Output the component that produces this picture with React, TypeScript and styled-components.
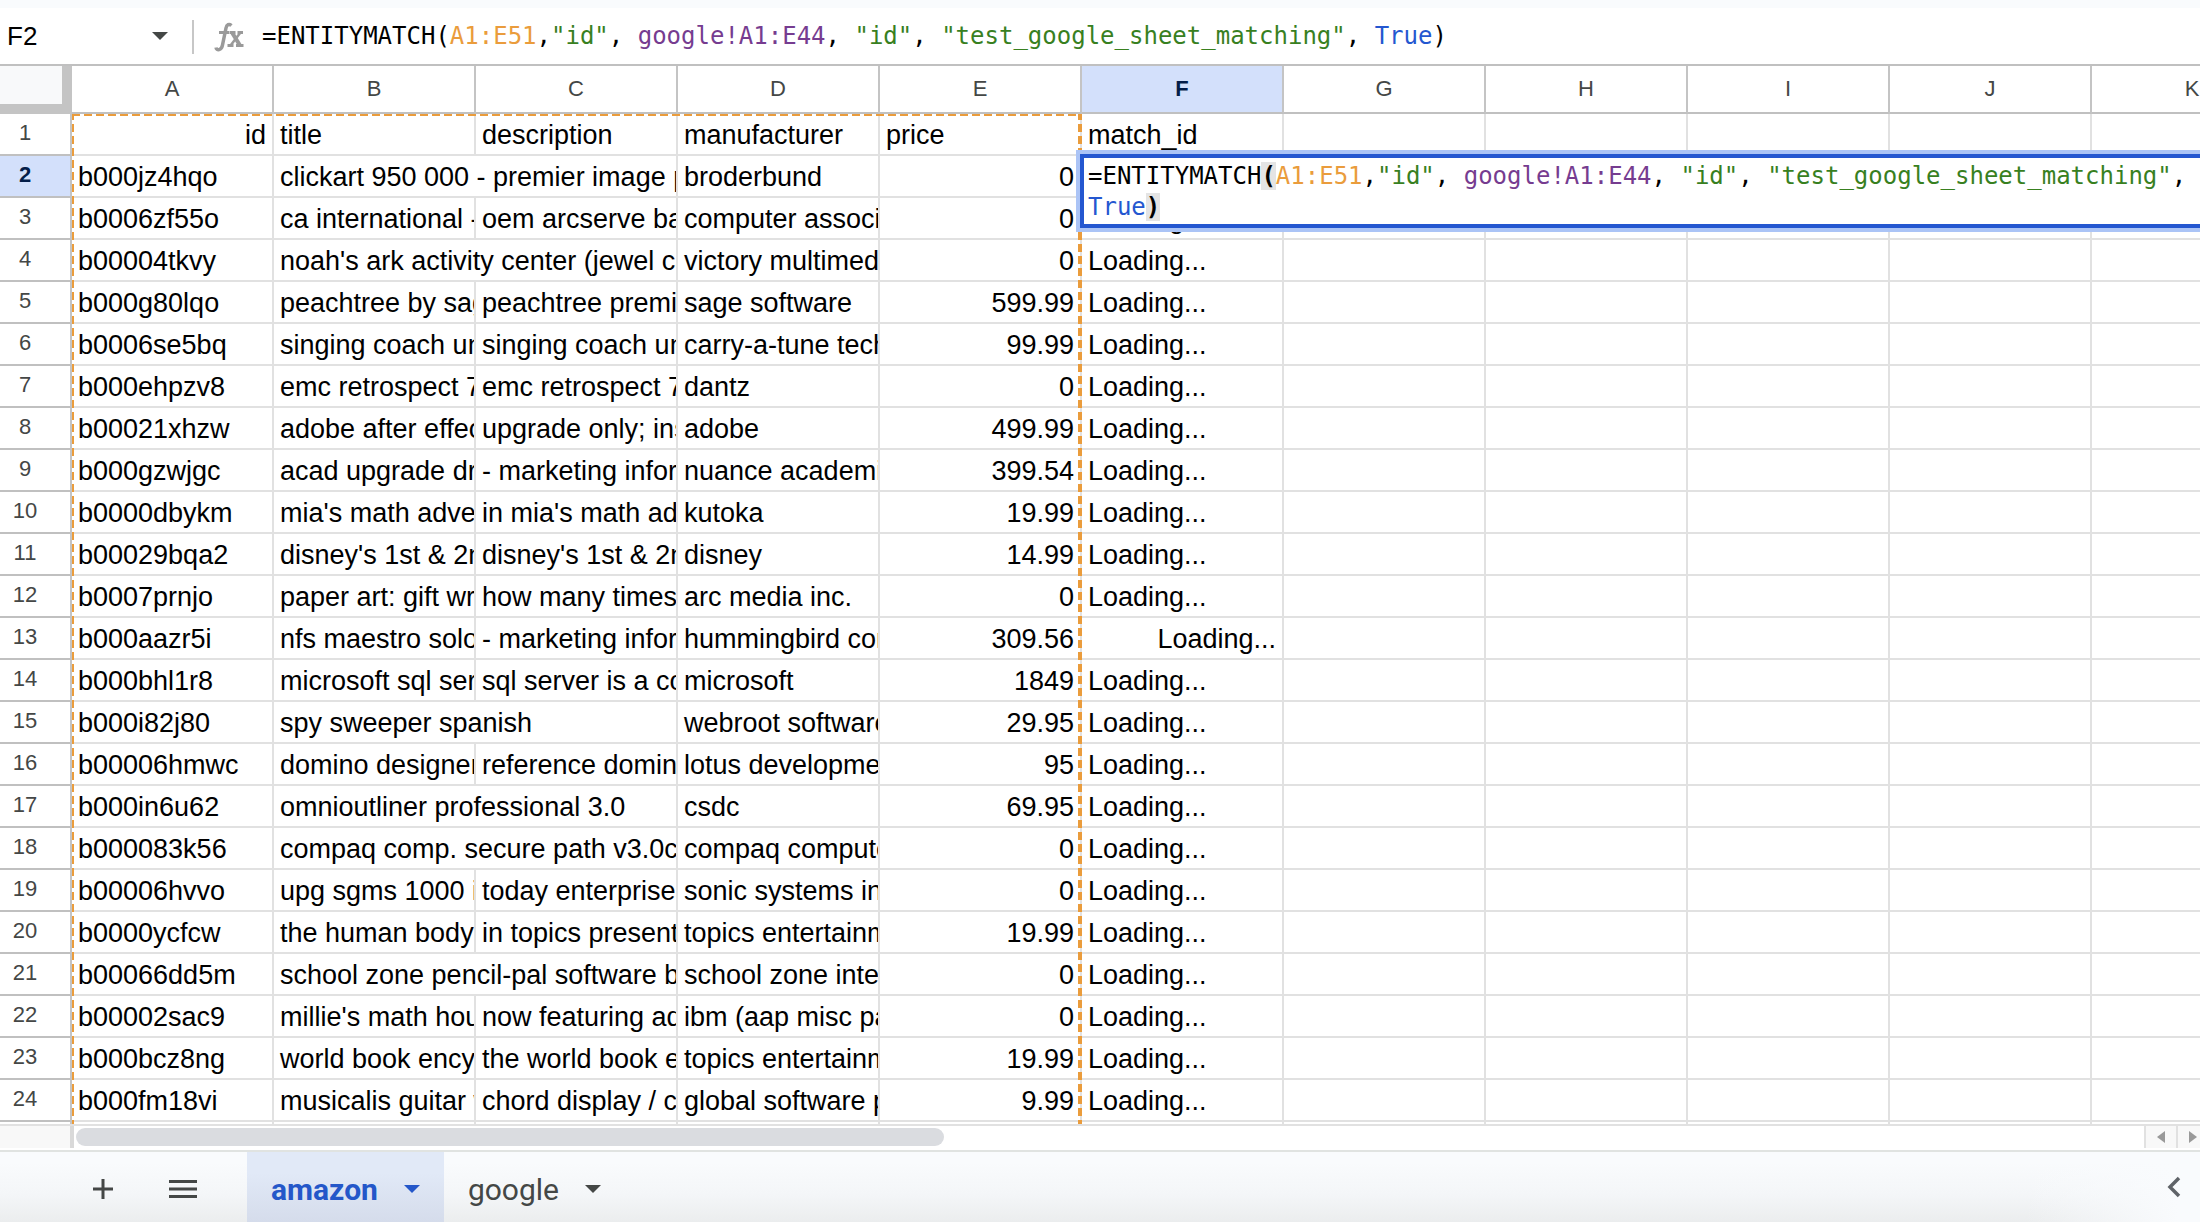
import React from "react";
import styled, { createGlobalStyle, css } from "styled-components";

const sans = '"Liberation Sans", Arial, sans-serif';
const mono = '"DejaVu Sans Mono", monospace';

const GlobalStyle = createGlobalStyle`
  * { box-sizing: border-box; }
  body { margin: 0; background: #fff; overflow: hidden; font-family: ${sans}; }
  button { border: 0; padding: 0; background: none; font: inherit; cursor: pointer; }
`;

const Page = styled.div`
  display: flex;
  flex-direction: column;
  height: 100vh;
  overflow: hidden;
`;

const FormulaBar = styled.header`
  display: flex;
  align-items: center;
  flex: none;
  height: 66px;
  border-top: 8px solid #f9fbfd;
  border-bottom: 2px solid #c0c0c0;
`;

const NameBox = styled.input`
  width: 144px;
  padding: 0 0 0 7px;
  border: 0;
  outline: 0;
  background: none;
  color: #000;
  font: 26px ${sans};
`;

const IconButton = styled.button`
  display: flex;
  align-items: center;
  justify-content: center;
  align-self: center;
  width: 32px;
  height: 32px;
  color: #444746;
`;

const Divider = styled.div`
  width: 2px;
  height: 34px;
  margin: 2px 20px 0 16px;
  background: #c7c7c7;
`;

const FxIcon = styled.svg`
  flex: none;
  width: 32px;
  height: 32px;
`;

const FormulaText = styled.div`
  flex: 1;
  padding-left: 16px;
  outline: 0;
  white-space: pre;
  font: 24px/32px ${mono};
  color: #000;
`;

const Token = styled.span<{ $color: string }>`
  color: ${(p) => p.$color};
`;

const Paren = styled.span<{ $lit?: boolean }>`
  ${(p) => p.$lit && css`
    background: #e4e4e4;
    font-weight: bold;
  `}
`;

const GridArea = styled.main`
  position: relative;
  flex: 1;
  min-height: 0;
  overflow: hidden;
`;

const Sheet = styled.table`
  width: 2294px;
  table-layout: fixed;
  border-collapse: separate;
  border-spacing: 0;
`;

const HeaderCol = styled.col`
  width: 72px;
`;

const DataCol = styled.col`
  width: 202px;
`;

const Corner = styled.td`
  padding: 0;
  background: #f8f9fa;
  border-right: 10px solid #c4c4c4;
  border-bottom: 10px solid #c4c4c4;
`;

const headerLook = css<{ $active?: boolean }>`
  padding: 0;
  border-right: 2px solid #c4c4c4;
  border-bottom: 2px solid #c0c0c0;
  background: ${(p) => (p.$active ? "#d3e0fb" : "#fff")};
  color: ${(p) => (p.$active ? "#041e49" : "#444746")};
  font-size: 22px;
  font-weight: ${(p) => (p.$active ? "bold" : "normal")};
`;

const ColumnHeader = styled.th<{ $active?: boolean }>`
  ${headerLook}
  height: 48px;
`;

const RowHeader = styled.th<{ $active?: boolean }>`
  ${headerLook}
  height: 42px;
  padding: 0 20px 2px 0;
  line-height: 38px;
`;

const Cell = styled.td<{ $right?: boolean; $anchor?: boolean }>`
  height: 42px;
  padding: 2px ${(p) => (p.$right ? 6 : 0)}px 0 6px;
  border-right: 2px solid #e1e1e1;
  border-bottom: 2px solid #e1e1e1;
  overflow: ${(p) => (p.$anchor ? "visible" : "hidden")};
  position: ${(p) => (p.$anchor ? "relative" : "static")};
  white-space: nowrap;
  text-align: ${(p) => (p.$right ? "right" : "left")};
  font-size: 27px;
  line-height: 38px;
  color: #000;
`;

const CellEditor = styled.div`
  position: absolute;
  top: -2px;
  left: -2px;
  z-index: 2;
  width: 1160px;
  padding: 3px 4px 1px;
  border: 4px solid #2457d0;
  box-shadow: 0 0 0 4px #abc4f6;
  background: #fff;
  white-space: pre-wrap;
  font: 24px/31px ${mono};
`;

const dash = (dir: string) =>
  `repeating-linear-gradient(${dir}, #ea9c3c 0 8px, transparent 8px 12px)`;

const RangeOutline = styled.div`
  position: absolute;
  top: 48px;
  bottom: 0;
  left: 72px;
  width: 1010px;
  pointer-events: none;
  background-image: ${dash("to right")}, ${dash("to bottom")}, ${dash("to bottom")};
  background-size: 100% 2px, 2px 1200px, 4px 1200px;
  background-position: 0 0, 0 -2px, 100% -2px;
  background-repeat: no-repeat;
`;

const ScrollRow = styled.div`
  display: flex;
  flex: none;
  height: 28px;
  padding-bottom: 2px;
  border-top: 2px solid #e1e1e1;
  border-bottom: 2px solid #e0e3e1;
`;

const ScrollCorner = styled.div`
  width: 74px;
  border-right: 4px solid #d9d9d9;
  background: #f8f8f8;
`;

const Track = styled.div`
  flex: 1;
  padding: 2px;
`;

const Thumb = styled.div`
  width: 42%;
  height: 18px;
  border-radius: 9px;
  background: #dadce0;
`;

const ScrollButton = styled.button`
  display: flex;
  align-items: center;
  justify-content: center;
  width: 32px;
  border-left: 2px solid #e1e1e1;
  background: #f8f8f8;
  color: #999;
  overflow: hidden;
  &:last-child { width: 24px; padding-left: 8px; }
`;

const TabBar = styled.footer`
  display: flex;
  align-items: stretch;
  flex: none;
  height: 70px;
  padding: 0 10px 0 74px;
  background:
    linear-gradient(to right, transparent 92%, #f9fbfd 99%),
    linear-gradient(to bottom, #f9fbfd 15%, #f4f6f8 60%, #ebedee);
`;

const Tools = styled.div`
  display: flex;
  gap: 22px;
`;

const ToolButton = styled.button`
  display: flex;
  align-items: center;
  justify-content: center;
  width: 58px;
  padding-top: 4px;
  color: #444746;
`;

const Tabs = styled.nav`
  display: flex;
  flex: 1;
  padding-left: 35px;
`;

const Tab = styled.button<{ $active?: boolean }>`
  display: flex;
  align-items: center;
  gap: 26px;
  padding: 4px 24px 0;
  background: ${(p) => (p.$active ? "linear-gradient(to bottom, #e1e9f7 30%, #d5dceb)" : "none")};
  color: ${(p) => (p.$active ? "#2457c9" : "#444746")};
  font-family: Roboto, ${sans};
  font-size: 30px;
  font-weight: ${(p) => (p.$active ? 700 : 400)};
`;

const Caret = () => (
  <svg width="16" height="8" viewBox="0 0 16 8" aria-hidden="true">
    <path d="M0 0h16L8 8z" fill="currentColor" />
  </svg>
);

const Formula = ({ lit }: { lit?: boolean }) => (
  <>
    =ENTITYMATCH<Paren $lit={lit}>(</Paren>
    <Token $color="#ea9c3c">A1:E51</Token>,<Token $color="#38801f">"id"</Token>,{" "}
    <Token $color="#763c90">google!A1:E44</Token>, <Token $color="#38801f">"id"</Token>,{" "}
    <Token $color="#38801f">"test_google_sheet_matching"</Token>,{" "}
    <Token $color="#2457d0">True</Token>
    <Paren $lit={lit}>)</Paren>
  </>
);

const columns = ["A", "B", "C", "D", "E", "F", "G", "H", "I", "J", "K"];

/* id, title, description (null lets the title run on), manufacturer, price */
type Product = [string, string, string | null, string, string];

const products: Product[] = [
  ["b000jz4hqo", "clickart 950 000 - premier image p", null, "broderbund", "0"],
  ["b0006zf55o", "ca international -", "oem arcserve ba", "computer associ", "0"],
  ["b00004tkvy", "noah's ark activity center (jewel ca", null, "victory multimed", "0"],
  ["b000g80lqo", "peachtree by sag", "peachtree premi", "sage software", "599.99"],
  ["b0006se5bq", "singing coach un", "singing coach un", "carry-a-tune tech", "99.99"],
  ["b000ehpzv8", "emc retrospect 7", "emc retrospect 7", "dantz", "0"],
  ["b00021xhzw", "adobe after effec", "upgrade only; ins", "adobe", "499.99"],
  ["b000gzwjgc", "acad upgrade dr", "- marketing infor", "nuance academi", "399.54"],
  ["b0000dbykm", "mia's math adve", "in mia's math adv", "kutoka", "19.99"],
  ["b00029bqa2", "disney's 1st & 2n", "disney's 1st & 2n", "disney", "14.99"],
  ["b0007prnjo", "paper art: gift wra", "how many times", "arc media inc.", "0"],
  ["b000aazr5i", "nfs maestro solo", "- marketing infor", "hummingbird con", "309.56"],
  ["b000bhl1r8", "microsoft sql ser", "sql server is a co", "microsoft", "1849"],
  ["b000i82j80", "spy sweeper spanish", null, "webroot software", "29.95"],
  ["b00006hmwc", "domino designer", "reference domino", "lotus developme", "95"],
  ["b000in6u62", "omnioutliner professional 3.0", null, "csdc", "69.95"],
  ["b000083k56", "compaq comp. secure path v3.0c-", null, "compaq compute", "0"],
  ["b00006hvvo", "upg sgms 1000 i", "today enterprises", "sonic systems in", "0"],
  ["b0000ycfcw", "the human body", "in topics present", "topics entertainm", "19.99"],
  ["b00066dd5m", "school zone pencil-pal software bu", null, "school zone inte", "0"],
  ["b00002sac9", "millie's math hou", "now featuring ad", "ibm (aap misc pa", "0"],
  ["b000bcz8ng", "world book ency", "the world book e", "topics entertainm", "19.99"],
  ["b000fm18vi", "musicalis guitar w", "chord display / c", "global software p", "9.99"],
];

const Blanks = ({ count }: { count: number }) => (
  <>
    {Array.from({ length: count }, (_, i) => (
      <Cell key={i} />
    ))}
  </>
);

export default function App() {
  return (
    <Page>
      <GlobalStyle />
      <FormulaBar>
        <NameBox aria-label="Name box" defaultValue="F2" />
        <IconButton aria-label="Open name list"><Caret /></IconButton>
        <Divider />
        <FxIcon viewBox="0 0 32 32" fill="none" stroke="#9a9a9a" aria-hidden="true">
          <path d="M2 27.500c.5 3.500 5.500 3 6.500-2.500L12 8c.7-3.500 3-4.500 5.500-2.500" strokeWidth="3.500" />
          <path d="M5 12.500h10M15.500 12.500h6M23.500 12.500h5.500M13.500 25.500h6M22 25.500h7.500" strokeWidth="3" />
          <path d="M18 12.500l8 13" strokeWidth="4" />
          <path d="M26.500 12.500l-10 13" strokeWidth="2.500" />
        </FxIcon>
        <FormulaText role="textbox" aria-label="Formula"><Formula /></FormulaText>
      </FormulaBar>

      <GridArea>
        <Sheet>
          <colgroup>
            <HeaderCol />
            {columns.map((c) => <DataCol key={c} />)}
          </colgroup>
          <thead>
            <tr>
              <Corner />
              {columns.map((c) => (
                <ColumnHeader key={c} scope="col" $active={c === "F"}>{c}</ColumnHeader>
              ))}
            </tr>
          </thead>
          <tbody>
            <tr>
              <RowHeader scope="row">1</RowHeader>
              <Cell $right>id</Cell>
              <Cell>title</Cell>
              <Cell>description</Cell>
              <Cell>manufacturer</Cell>
              <Cell>price</Cell>
              <Cell>match_id</Cell>
              <Blanks count={5} />
            </tr>
            {products.map(([id, title, description, maker, price], i) => {
              const row = i + 2;
              const editing = row === 2;
              return (
                <tr key={id}>
                  <RowHeader scope="row" $active={editing}>{row}</RowHeader>
                  <Cell>{id}</Cell>
                  <Cell colSpan={description === null ? 2 : 1}>{title}</Cell>
                  {description !== null && <Cell>{description}</Cell>}
                  <Cell>{maker}</Cell>
                  <Cell $right>{price}</Cell>
                  <Cell $anchor={editing} $right={row === 13}>
                    {editing ? (
                      <CellEditor role="textbox" aria-label="Edit F2"><Formula lit /></CellEditor>
                    ) : (
                      "Loading..."
                    )}
                  </Cell>
                  <Blanks count={5} />
                </tr>
              );
            })}
            <tr>
              <RowHeader scope="row" />
              <Blanks count={11} />
            </tr>
          </tbody>
        </Sheet>
        <RangeOutline />
      </GridArea>

      <ScrollRow>
        <ScrollCorner />
        <Track><Thumb /></Track>
        <ScrollButton aria-label="Scroll left">
          <svg width="8" height="12" viewBox="0 0 8 12"><path d="M8 0v12L0 6z" fill="currentColor" /></svg>
        </ScrollButton>
        <ScrollButton aria-label="Scroll right">
          <svg width="8" height="12" viewBox="0 0 8 12"><path d="M0 0v12l8-6z" fill="currentColor" /></svg>
        </ScrollButton>
      </ScrollRow>

      <TabBar>
        <Tools>
          <ToolButton aria-label="Add sheet">
            <svg width="20" height="20" viewBox="0 0 20 20"><path d="M10 0v20M0 10h20" stroke="currentColor" strokeWidth="3" /></svg>
          </ToolButton>
          <ToolButton aria-label="All sheets">
            <svg width="28" height="20" viewBox="0 0 28 20"><path d="M0 2.500h28M0 10h28M0 17.500h28" stroke="currentColor" strokeWidth="3" /></svg>
          </ToolButton>
        </Tools>
        <Tabs>
          <Tab $active>amazon <Caret /></Tab>
          <Tab>google <Caret /></Tab>
        </Tabs>
        <IconButton aria-label="Show side panel">
          <svg width="14" height="22" viewBox="0 0 14 22"><path d="M12 2L3 11l9 9" fill="none" stroke="#5f6368" strokeWidth="3.500" /></svg>
        </IconButton>
      </TabBar>
    </Page>
  );
}
